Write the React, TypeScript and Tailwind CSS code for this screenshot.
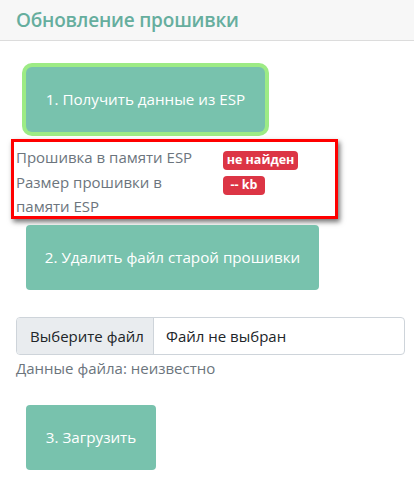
import React from "react";

export default function App() {
  return (
    <div className="w-[414px] h-[497px] bg-white overflow-hidden font-['Open_Sans',sans-serif]">
      <div className="h-[41px] bg-[#f7f7f7] border-b border-[#dcdcdc] pl-4 flex items-center">
        <h1 className="text-[19px] font-semibold text-[#66ae9e] leading-none tracking-[-0.2px]">
          Обновление прошивки
        </h1>
      </div>

      <div className="px-4">
        <button className="mt-[26px] ml-[10px] w-[239px] h-[65px] rounded-[6px] bg-[#78c2ad] ring-4 ring-[#9deb85] text-white text-[15.2px] flex items-center justify-center">
          1. Получить данные из ESP
        </button>

        <div className="mt-[7px] -ml-[5px] w-[327px] h-[80px] border-[3px] border-[#ff0000] shadow-[2px_3px_5px_rgba(0,0,0,0.55)] pt-[3px] pl-[2px]">
          <div className="grid grid-cols-[207px_1fr] text-[15px] leading-[24px] text-[#6c757d]">
            <div>Прошивка в памяти ESP</div>
            <div className="pt-[1px]">
              <span className="inline-flex items-center justify-center w-[75px] h-[19px] rounded-[4px] bg-[#dc3545] text-white text-[12.5px] font-bold leading-none">
                не найден
              </span>
            </div>
            <div className="w-[160px]">Размер прошивки в памяти ESP</div>
            <div className="pt-[1px]">
              <span className="inline-flex items-center justify-center w-[42px] h-[19px] rounded-[4px] bg-[#dc3545] text-white text-[12.5px] font-bold leading-none whitespace-pre">
                {"-- kb"}
              </span>
            </div>
          </div>
        </div>

        <button className="mt-[6px] ml-[10px] w-[293px] h-[65px] rounded-[4px] bg-[#78c2ad] text-white text-[15.2px] flex items-center justify-center">
          2. Удалить файл старой прошивки
        </button>

        <div className="mt-[27px] w-[389px] h-[38px] flex border border-[#ced4da] rounded-[4px] overflow-hidden text-[15px] text-[#212529]">
          <div className="w-[137px] bg-[#e9ecef] border-r border-[#ced4da] flex items-center pl-[13px]">
            Выберите файл
          </div>
          <div className="flex items-center pl-[12px]">Файл не выбран</div>
        </div>

        <div className="mt-[1px] text-[15px] leading-[24px] text-[#6c757d]">
          Данные файла: неизвестно
        </div>

        <button className="mt-[25px] ml-[10px] w-[130px] h-[65px] rounded-[4px] bg-[#78c2ad] text-white text-[15.2px] flex items-center justify-center">
          3. Загрузить
        </button>
      </div>
    </div>
  );
}
